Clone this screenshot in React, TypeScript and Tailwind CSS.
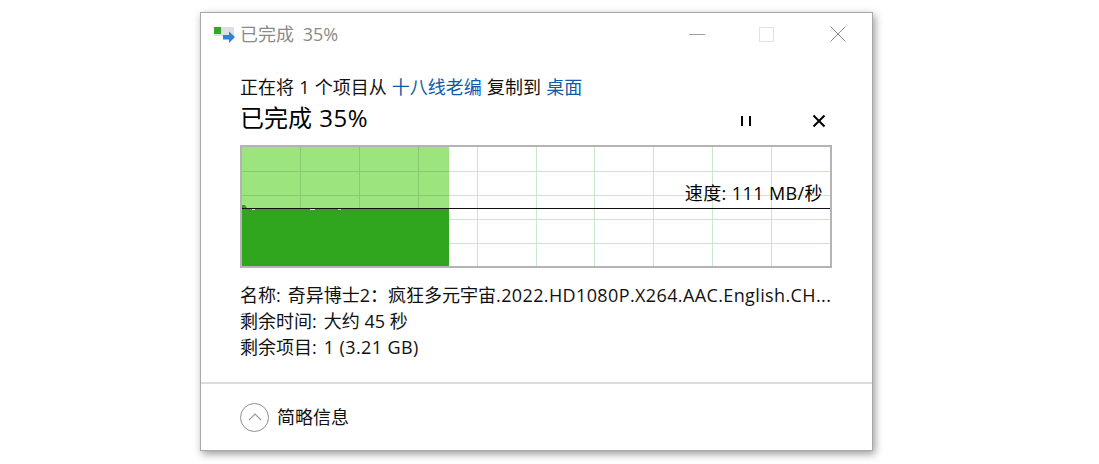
import React from "react";

// 网格线 + 进度区域
const SpeedChart: React.FC = () => {
    const verticals = [58, 117, 176, 235, 294, 352, 411, 470, 529];
    const horizontals = [24, 48, 72, 96];

    return (
        <svg width="588" height="119" viewBox="0 0 588 119" className="block">
            {verticals.map((x) => (
                <line key={x} x1={x + 0.5} y1="0" x2={x + 0.5} y2="119" stroke="#c9e8cb" />
            ))}
            {horizontals.map((y) => (
                <line key={y} x1="0" y1={y + 0.5} x2="588" y2={y + 0.5} stroke="#c9e8cb" />
            ))}
            <rect x="0" y="0" width="207" height="62" fill="#9ce47e" />
            {verticals.slice(0, 3).map((x) => (
                <line key={x} x1={x + 0.5} y1="0" x2={x + 0.5} y2="62" stroke="#86cb6d" />
            ))}
            {horizontals.slice(0, 2).map((y) => (
                <line key={y} x1="0" y1={y + 0.5} x2="207" y2={y + 0.5} stroke="#86cb6d" />
            ))}
            <rect x="0" y="62" width="207" height="57" fill="#30a61e" />
            <rect x="0" y="62" width="207" height="3" fill="#3c9a2b" />
            <path d="M0 58h3l2 3H0z" fill="#3c9a2b" />
            <line x1="0" y1="61.5" x2="588" y2="61.5" stroke="#111" />
            <rect x="68" y="62" width="5" height="1" fill="#cfe8c8" />
            <rect x="10" y="62" width="3" height="1" fill="#cfe8c8" />
            <rect x="96" y="62" width="3" height="1" fill="#a9d8a0" />
        </svg>
    );
};

const App: React.FC = () => {
    return (
        <div className="h-[464px] w-[1099px] bg-white overflow-hidden pl-[200px] pt-[12px] text-[18px] leading-[26px] text-[#111] font-['Open_Sans','Noto_Sans_CJK_SC',sans-serif]">
            <div className="w-[673px] h-[439px] flex flex-col bg-white border border-[#a8a8a8] shadow-[2px_3px_8px_rgba(0,0,0,0.4)]">
                {/* Title bar */}
                <div className="h-[40px] flex items-center pl-[12px]">
                    <svg width="24" height="22" viewBox="0 0 24 22" className="mt-[4px]">
                        <rect x="1" y="3" width="20" height="9" fill="#dcdfe3" />
                        <rect x="1" y="3" width="7" height="7" fill="#2fa82a" />
                        <path d="M10 11h6V7.5l6 5.5-6 6v-3.5h-6z" fill="#2f80d6" />
                    </svg>
                    <span className="ml-[3px] mt-[2px] text-[#8a8a8a] [word-spacing:4px]">已完成 35%</span>
                    <div className="ml-auto flex items-center mt-[2px]">
                        <div className="w-[16px] h-px bg-[#a0a0a0] mr-[54px]" />
                        <div className="w-[15px] h-[15px] border border-[#e2e2e2] mr-[56px]" />
                        <svg width="16" height="16" viewBox="0 0 16 16" className="mr-[26px]">
                            <path d="M0.5 0.5l15 15M15.5 0.5l-15 15" stroke="#8c8c8c" strokeWidth="1" fill="none" />
                        </svg>
                    </div>
                </div>

                {/* Content */}
                <div className="flex-1 pl-[39px] pr-[40px] pt-[21px]">
                    <div className="whitespace-nowrap [word-spacing:0.5px]">
                        正在将 1 个项目从 <span className="text-[#0f5aa8]">十八线老编</span> 复制到 <span className="text-[#0f5aa8]">桌面</span>
                    </div>
                    <div className="flex items-center h-[36px] mt-[1px]">
                        <span className="text-[24px] leading-[32px] text-black -mt-[2px] [word-spacing:1px]">已完成 <span className="tracking-[0.5px]">35%</span></span>
                        <div className="ml-auto flex items-center mt-[4px]">
                            <svg width="12" height="12" viewBox="0 0 12 12" className="mr-[60px]">
                                <path d="M1 1h2v10H1zM9 1h2v10H9z" fill="#000" />
                            </svg>
                            <svg width="14" height="14" viewBox="0 0 14 14" className="mr-[6px]">
                                <path d="M1.5 1.5l11 11M12.5 1.5l-11 11" stroke="#000" strokeWidth="2" fill="none" />
                            </svg>
                        </div>
                    </div>
                    {/* Graph */}
                    <div className="relative mt-[8px] w-[592px] h-[123px] border-2 border-[#b4b4b4]">
                        <SpeedChart />
                        <span className="absolute right-[7px] top-[33px] whitespace-nowrap text-black tracking-[0.4px]">速度: 111 MB/秒</span>
                    </div>
                    {/* Details */}
                    <div className="mt-[14px] flex flex-col">
                        <div className="whitespace-nowrap overflow-hidden w-[594px]">名称:<span className="ml-[7px]">奇异博士2：疯狂多元宇宙</span><span className="tracking-[0.38px]">.2022.HD1080P.X264.AAC.English.CH...</span></div>
                        <div className="whitespace-nowrap">剩余时间:<span className="ml-[7px]">大约 45 秒</span></div>
                        <div className="whitespace-nowrap">剩余项目:<span className="ml-[7px] tracking-[0.4px]">1 (3.21 GB)</span></div>
                    </div>
                </div>

                {/* Footer */}
                <div className="h-[68px] border-t-2 border-[#dcdcdc] flex items-center pl-[39px]">
                    <div className="w-[29px] h-[29px] rounded-full border border-[#8f8f8f] flex items-center justify-center">
                        <svg width="14" height="8" viewBox="0 0 14 8">
                            <path d="M1 7l6-6 6 6" stroke="#9a9a9a" strokeWidth="1.1" fill="none" />
                        </svg>
                    </div>
                    <span className="ml-[8px]">简略信息</span>
                </div>
            </div>
        </div>
    );
};

export default App;
